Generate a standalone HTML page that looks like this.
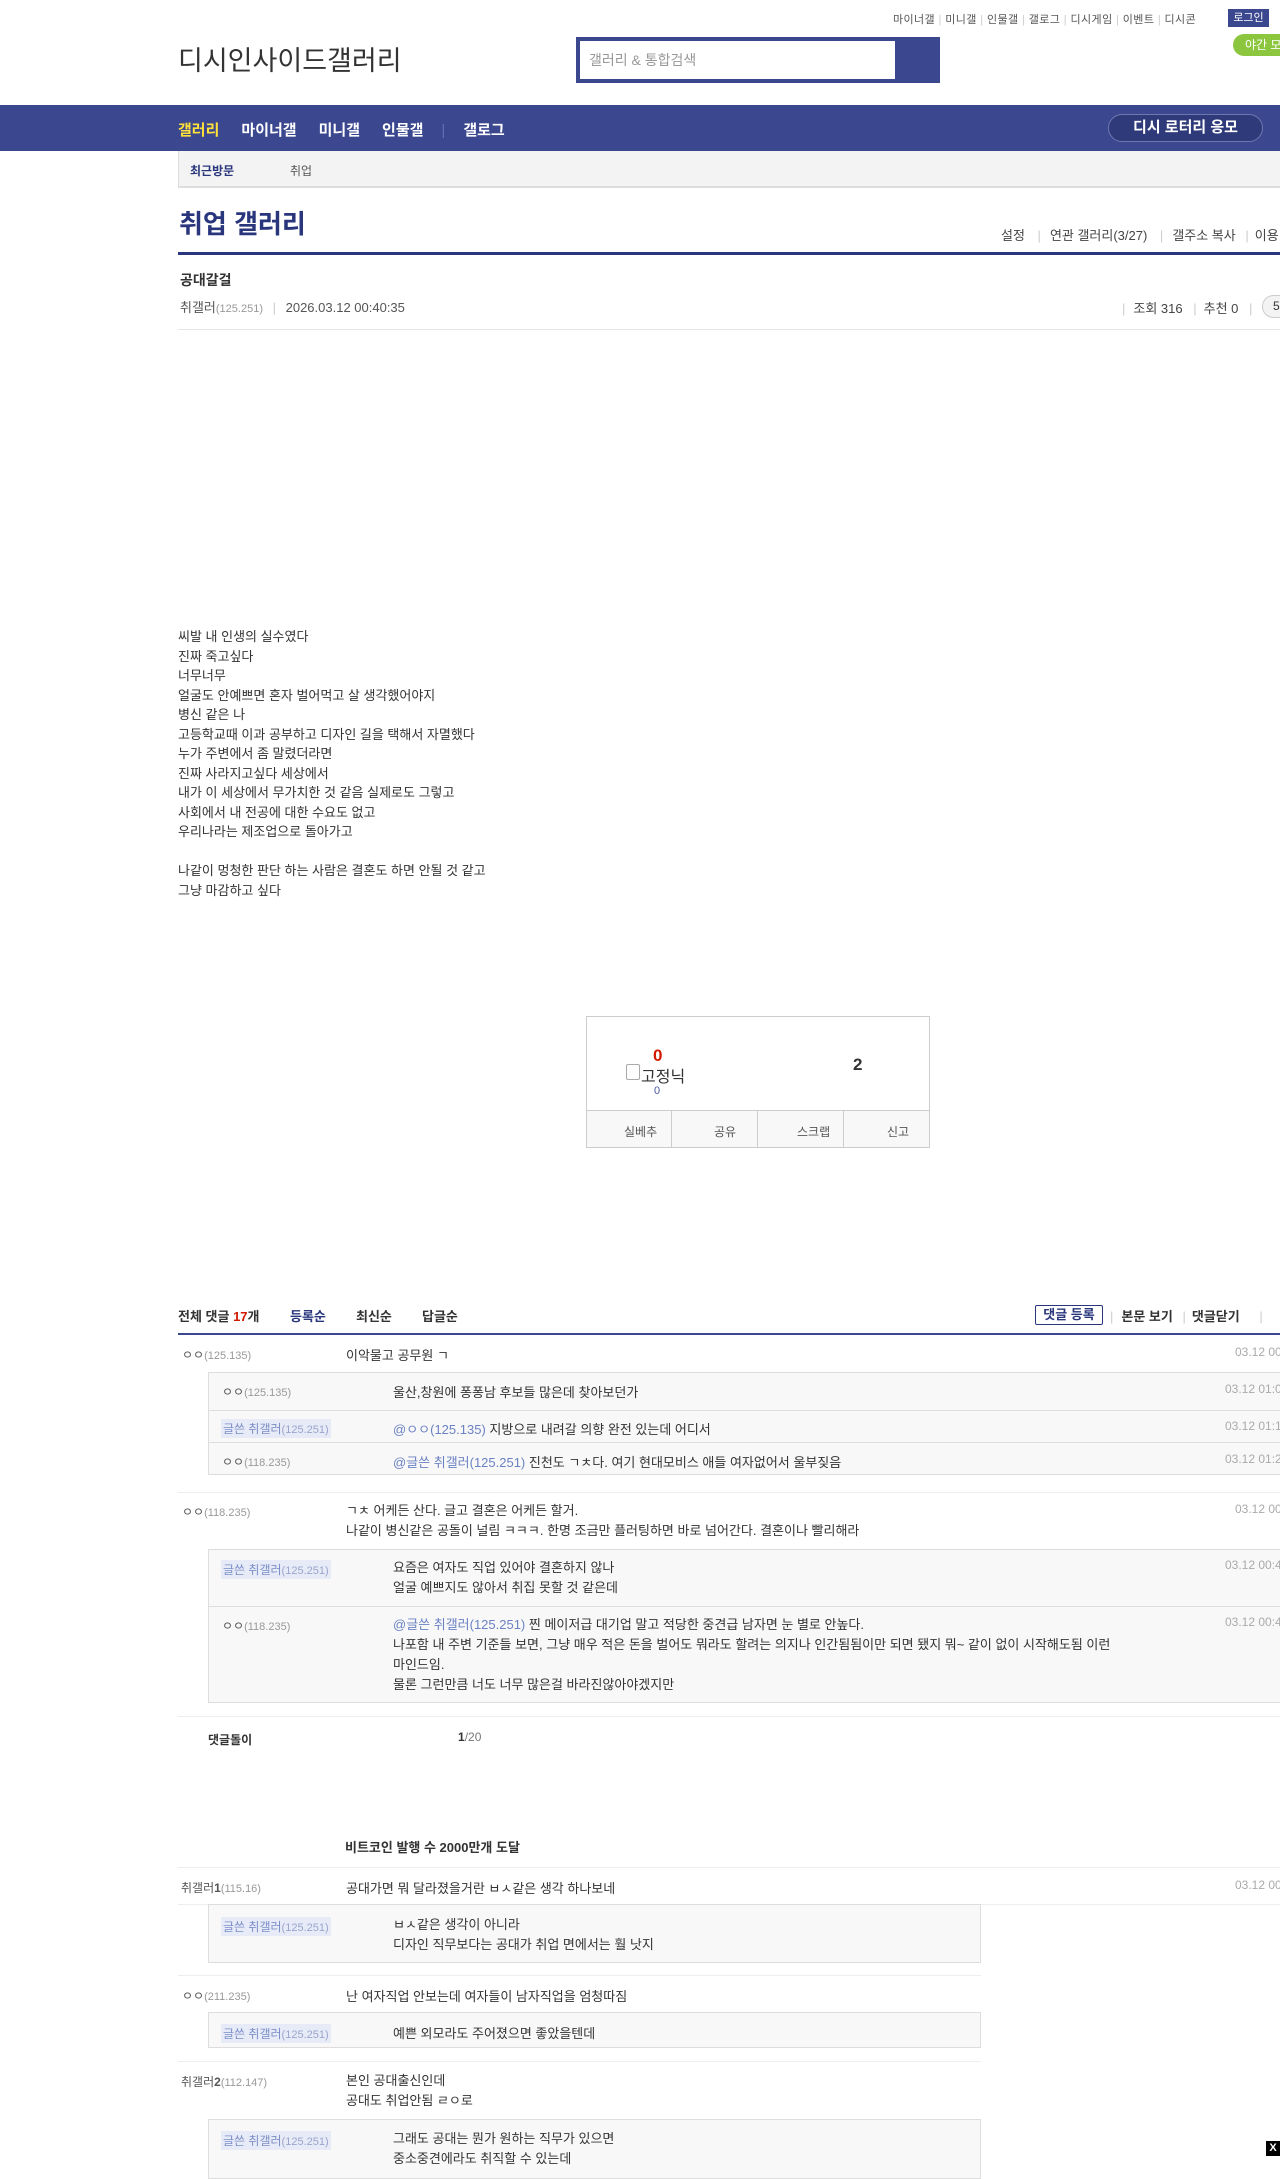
<!DOCTYPE html>
<html><head><meta charset="utf-8">
<style>
*{margin:0;padding:0;box-sizing:border-box}
body{width:1280px;height:2156px;overflow:hidden;position:relative;background:#fff;font-family:"Liberation Sans","Noto Sans CJK KR",sans-serif;color:#333;font-size:13px}
.a{position:absolute;white-space:nowrap}
.g{color:#999;font-size:11px}
.nm{color:#555;font-size:12px}
.hl{background:#e7ebf7;color:#7b8ec8;font-size:12px;padding:1px 2px}
.hl span{color:#9aa5cc;font-size:11px}
.ln{position:absolute;height:1px;background:#e6e6e6}
.box{position:absolute;left:208px;border:1px solid #ddd;background:#f8f8f8}
.dt{color:#aaa;font-size:12px}
.at{color:#6b82c4}
</style></head><body>
<!-- top links -->
<div class="a" style="left:893px;top:11px;font-size:11px;color:#555;letter-spacing:0.4px">마이너갤 <span style="color:#ccc">|</span> 미니갤 <span style="color:#ccc">|</span> 인물갤 <span style="color:#ccc">|</span> 갤로그 <span style="color:#ccc">|</span> 디시게임 <span style="color:#ccc">|</span> 이벤트 <span style="color:#ccc">|</span> 디시콘</div>
<div class="a" style="left:1228px;top:9px;width:41px;height:18px;background:#3b4890;color:#fff;font-size:11px;text-align:center;line-height:18px">로그인</div>
<div class="a" style="left:1233px;top:34px;width:60px;height:22px;background:#8cc63e;border-radius:11px;color:#fff;font-size:12px;line-height:22px;padding-left:12px">야간 모드</div>
<div class="a" style="left:178px;top:39px;font-size:27px;color:#333">디시인사이드갤러리</div>
<div class="a" style="left:576px;top:37px;width:364px;height:46px;background:#3b4890"></div>
<div class="a" style="left:580px;top:41px;width:315px;height:38px;background:#fff;color:#999;font-size:14px;line-height:38px;padding-left:9px">갤러리 &amp; 통합검색</div>
<!-- nav -->
<div class="a" style="left:0;top:105px;width:1280px;height:46px;background:#3b4890"></div>
<div class="a" style="left:178px;top:119px;font-size:15px;font-weight:bold;color:#fff"><span style="color:#ffe13a">갤러리</span><span style="margin-left:22px">마이너갤</span><span style="margin-left:22px">미니갤</span><span style="margin-left:22px">인물갤</span><span style="margin-left:18px;color:#6070b0;font-weight:normal">|</span><span style="margin-left:18px">갤로그</span></div>
<div class="a" style="left:1108px;top:114px;width:155px;height:28px;border:1px solid #6d78b0;border-radius:14px;background:#2f3a7a;color:#fff;font-size:15px;font-weight:bold;text-align:center;line-height:26px">디시 로터리 응모</div>
<!-- sub bar -->
<div class="a" style="left:178px;top:151px;width:1110px;height:37px;background:#f3f3f3;border-left:1px solid #ddd;border-bottom:2px solid #ddd"></div>
<div class="a" style="left:190px;top:162px;font-size:12px;font-weight:bold;color:#29367c">최근방문</div>
<div class="a" style="left:290px;top:162px;font-size:12px;color:#555">취업</div>
<!-- title -->
<div class="a" style="left:179px;top:204px;font-size:26px;font-weight:bold;color:#29367c">취업 갤러리</div>
<div class="a" style="left:1001px;top:225px;font-size:13px;color:#444">설정 <span style="color:#ccc;margin:0 9px">|</span>연관 갤러리(3/27) <span style="color:#ccc;margin:0 9px">|</span>갤주소 복사 <span style="color:#ccc;margin:0 6px">|</span>이용</div>
<div class="a" style="left:178px;top:252px;width:1110px;height:3px;background:#29367c"></div>
<div class="a" style="left:180px;top:270px;font-size:14px;font-weight:bold;color:#333">공대갈걸</div>
<div class="a" style="left:180px;top:297px;font-size:13px;color:#555">취갤러<span class="g">(125.251)</span> <span style="color:#ccc;margin:0 6px">|</span> 2026.03.12 00:40:35</div>
<div class="a" style="left:1122px;top:298px;font-size:13px;color:#444"><span style="color:#ccc;margin-right:8px">|</span>조회 316 <span style="color:#ccc;margin:0 7px">|</span>추천 0 <span style="color:#ccc;margin:0 7px">|</span></div>
<div class="a" style="left:1262px;top:295px;width:40px;height:23px;border:1px solid #ccc;border-radius:12px;background:#f3f3f3;padding-left:10px;font-size:12px;line-height:21px">5</div>
<div class="ln" style="left:178px;top:329px;width:1110px"></div>
<!-- body -->
<div class="a" style="left:178px;top:627px;font-size:13px;line-height:19.5px;color:#333">씨발 내 인생의 실수였다<br>진짜 죽고싶다<br>너무너무<br>얼굴도 안예쁘면 혼자 벌어먹고 살 생각했어야지<br>병신 같은 나<br>고등학교때 이과 공부하고 디자인 길을 택해서 자멸했다<br>누가 주변에서 좀 말렸더라면<br>진짜 사라지고싶다 세상에서<br>내가 이 세상에서 무가치한 것 같음 실제로도 그렇고<br>사회에서 내 전공에 대한 수요도 없고<br>우리나라는 제조업으로 돌아가고<br><br>나같이 멍청한 판단 하는 사람은 결혼도 하면 안될 것 같고<br>그냥 마감하고 싶다</div>
<!-- recommend box -->
<div class="a" style="left:586px;top:1016px;width:344px;height:132px;border:1px solid #ccc"></div>
<div class="a" style="left:586px;top:1110px;width:344px;height:38px;border:1px solid #ccc;background:#f8f8f8"></div>
<div class="a" style="left:671px;top:1110px;width:1px;height:38px;background:#ccc"></div>
<div class="a" style="left:757px;top:1110px;width:1px;height:38px;background:#ccc"></div>
<div class="a" style="left:843px;top:1110px;width:1px;height:38px;background:#ccc"></div>
<div class="a" style="left:624px;top:1123px;font-size:12px;color:#555">실베추</div>
<div class="a" style="left:714px;top:1123px;font-size:12px;color:#555">공유</div>
<div class="a" style="left:797px;top:1123px;font-size:12px;color:#555">스크랩</div>
<div class="a" style="left:887px;top:1123px;font-size:12px;color:#555">신고</div>
<div class="a" style="left:653px;top:1046px;font-size:17px;font-weight:bold;color:#d31900">0</div>
<div class="a" style="left:626px;top:1064px;width:14px;height:16px;border:1px solid #aaa;border-radius:2px"></div>
<div class="a" style="left:641px;top:1063px;font-size:16px;color:#333">고정닉</div>
<div class="a" style="left:654px;top:1085px;font-size:11px;color:#4a5aa0">0</div>
<div class="a" style="left:853px;top:1055px;font-size:17px;font-weight:bold;color:#333">2</div>
<!-- comments header -->
<div class="a" style="left:178px;top:1306px;font-size:13px;font-weight:bold;color:#333">전체 댓글 <span style="color:#d31900">17</span>개</div>
<div class="a" style="left:290px;top:1306px;font-size:13px;font-weight:bold;color:#29367c">등록순</div>
<div class="a" style="left:356px;top:1306px;font-size:13px;font-weight:bold;color:#333">최신순</div>
<div class="a" style="left:422px;top:1306px;font-size:13px;font-weight:bold;color:#333">답글순</div>
<div class="a" style="left:1035px;top:1305px;width:68px;height:20px;border:1px solid #29367c;border-radius:2px;font-size:13px;font-weight:bold;color:#29367c;text-align:center;line-height:18px">댓글 등록</div>
<div class="a" style="left:1110px;top:1306px;font-size:13px;font-weight:bold;color:#333"><span style="color:#ccc;font-weight:normal;margin-right:8px">|</span>본문 보기 <span style="color:#ccc;font-weight:normal;margin:0 6px">|</span>댓글닫기 <span style="color:#ccc;font-weight:normal;margin-left:16px">|</span></div>
<div class="a" style="left:178px;top:1333px;width:1110px;height:2px;background:#3b4890"></div>
<!-- c1 -->
<div class="a nm" style="left:182px;top:1346px">ㅇㅇ<span class="g">(125.135)</span></div>
<div class="a" style="left:346px;top:1345px">이악물고 공무원 ㄱ</div>
<div class="a dt" style="left:1235px;top:1345px">03.12 00:</div>
<div class="box" style="top:1372px;width:1080px;height:103px"></div>
<div class="ln" style="left:209px;top:1410px;width:1080px;background:#ddd"></div>
<div class="ln" style="left:209px;top:1442px;width:1080px;background:#ddd"></div>
<div class="a nm" style="left:222px;top:1383px">ㅇㅇ<span class="g">(125.135)</span></div>
<div class="a" style="left:393px;top:1382px">울산,창원에 퐁퐁남 후보들 많은데 찾아보던가</div>
<div class="a dt" style="left:1225px;top:1382px">03.12 01:0</div>
<div class="a hl" style="left:221px;top:1419px">글쓴 취갤러<span>(125.251)</span></div>
<div class="a" style="left:393px;top:1419px"><span class="at">@ㅇㅇ(125.135)</span> 지방으로 내려갈 의향 완전 있는데 어디서</div>
<div class="a dt" style="left:1225px;top:1419px">03.12 01:1</div>
<div class="a nm" style="left:222px;top:1453px">ㅇㅇ<span class="g">(118.235)</span></div>
<div class="a" style="left:393px;top:1452px"><span class="at">@글쓴 취갤러(125.251)</span> 진천도 ㄱㅊ다. 여기 현대모비스 애들 여자없어서 울부짖음</div>
<div class="a dt" style="left:1225px;top:1452px">03.12 01:2</div>
<div class="ln" style="left:178px;top:1492px;width:1110px;background:#eee"></div>
<!-- c2 -->
<div class="a nm" style="left:182px;top:1503px">ㅇㅇ<span class="g">(118.235)</span></div>
<div class="a" style="left:346px;top:1501px;line-height:20px">ㄱㅊ 어케든 산다. 글고 결혼은 어케든 할거.<br>나같이 병신같은 공돌이 널림 ㅋㅋㅋ. 한명 조금만 플러팅하면 바로 넘어간다. 결혼이나 빨리해라</div>
<div class="a dt" style="left:1235px;top:1502px">03.12 00:</div>
<div class="box" style="top:1549px;width:1080px;height:154px"></div>
<div class="ln" style="left:209px;top:1606px;width:1080px;background:#ddd"></div>
<div class="a hl" style="left:221px;top:1560px">글쓴 취갤러<span>(125.251)</span></div>
<div class="a" style="left:393px;top:1558px;line-height:20px">요즘은 여자도 직업 있어야 결혼하지 않나<br>얼굴 예쁘지도 않아서 취집 못할 것 같은데</div>
<div class="a dt" style="left:1225px;top:1558px">03.12 00:4</div>
<div class="a nm" style="left:222px;top:1617px">ㅇㅇ<span class="g">(118.235)</span></div>
<div class="a" style="left:393px;top:1615px;line-height:20px"><span class="at">@글쓴 취갤러(125.251)</span> 찐 메이저급 대기업 말고 적당한 중견급 남자면 눈 별로 안높다.<br>나포함 내 주변 기준들 보면, 그냥 매우 적은 돈을 벌어도 뭐라도 할려는 의지나 인간됨됨이만 되면 됐지 뭐~ 같이 없이 시작해도됨 이런<br>마인드임.<br>물론 그런만큼 너도 너무 많은걸 바라진않아야겠지만</div>
<div class="a dt" style="left:1225px;top:1615px">03.12 00:4</div>
<div class="ln" style="left:178px;top:1716px;width:1110px;background:#eee"></div>
<div class="a" style="left:208px;top:1731px;font-size:12px;font-weight:bold;color:#333">댓글돌이</div>
<div class="a" style="left:458px;top:1730px;font-size:12px;color:#777"><b style="color:#333">1</b>/20</div>
<!-- ad title -->
<div class="a" style="left:345px;top:1837px;font-size:13px;font-weight:bold;color:#333">비트코인 발행 수 2000만개 도달</div>
<div class="ln" style="left:178px;top:1867px;width:1110px;background:#eee"></div>
<div class="a nm" style="left:181px;top:1879px">취갤러<b>1</b><span class="g">(115.16)</span></div>
<div class="a" style="left:346px;top:1878px">공대가면 뭐 달라졌을거란 ㅂㅅ같은 생각 하나보네</div>
<div class="a dt" style="left:1235px;top:1878px">03.12 00:</div>
<div class="ln" style="left:178px;top:1904px;width:1110px;background:#eee"></div>
<div class="box" style="top:1904px;width:773px;height:59px"></div>
<div class="a hl" style="left:221px;top:1917px">글쓴 취갤러<span>(125.251)</span></div>
<div class="a" style="left:393px;top:1915px;line-height:20px">ㅂㅅ같은 생각이 아니라<br>디자인 직무보다는 공대가 취업 면에서는 훨 낫지</div>
<div class="ln" style="left:178px;top:1975px;width:803px;background:#eee"></div>
<div class="a nm" style="left:182px;top:1987px">ㅇㅇ<span class="g">(211.235)</span></div>
<div class="a" style="left:346px;top:1986px">난 여자직업 안보는데 여자들이 남자직업을 엄청따짐</div>
<div class="box" style="top:2012px;width:773px;height:36px"></div>
<div class="a hl" style="left:221px;top:2024px">글쓴 취갤러<span>(125.251)</span></div>
<div class="a" style="left:393px;top:2023px">예쁜 외모라도 주어졌으면 좋았을텐데</div>
<div class="ln" style="left:178px;top:2061px;width:803px;background:#eee"></div>
<div class="a nm" style="left:181px;top:2073px">취갤러<b>2</b><span class="g">(112.147)</span></div>
<div class="a" style="left:346px;top:2071px;line-height:20px">본인 공대출신인데<br>공대도 취업안됨 ㄹㅇ로</div>
<div class="box" style="top:2119px;width:773px;height:60px"></div>
<div class="a hl" style="left:221px;top:2131px">글쓴 취갤러<span>(125.251)</span></div>
<div class="a" style="left:393px;top:2129px;line-height:20px">그래도 공대는 뭔가 원하는 직무가 있으면<br>중소중견에라도 취직할 수 있는데</div>
<div class="a" style="left:1266px;top:2141px;width:14px;height:15px;background:#000;color:#fff;font-size:11px;font-weight:bold;text-align:center;line-height:15px">X</div>
</body></html>
